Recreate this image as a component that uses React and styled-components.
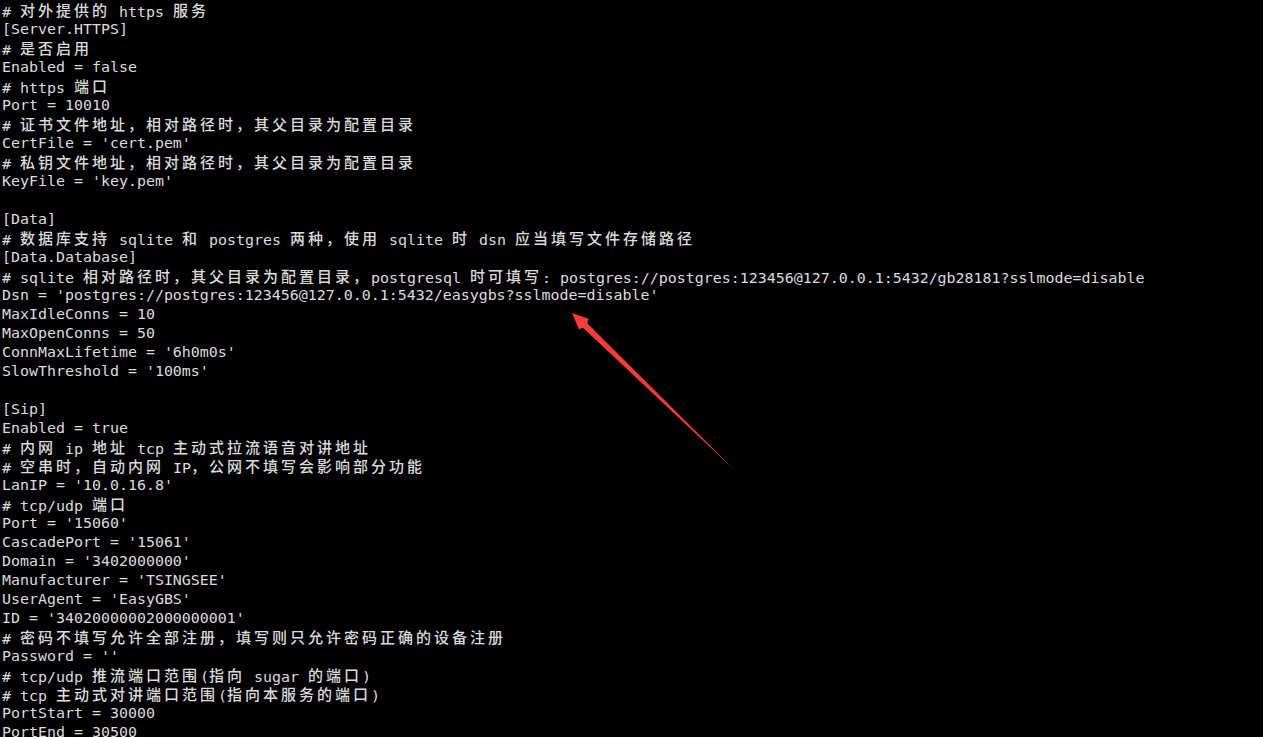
import styled, { createGlobalStyle } from "styled-components";

const GlobalStyle = createGlobalStyle`
  html, body {
    margin: 0;
    padding: 0;
    background: #000;
  }
`;

const lines = [
  "# 对外提供的 https 服务",
  "[Server.HTTPS]",
  "# 是否启用",
  "Enabled = false",
  "# https 端口",
  "Port = 10010",
  "# 证书文件地址，相对路径时，其父目录为配置目录",
  "CertFile = 'cert.pem'",
  "# 私钥文件地址，相对路径时，其父目录为配置目录",
  "KeyFile = 'key.pem'",
  "",
  "[Data]",
  "# 数据库支持 sqlite 和 postgres 两种，使用 sqlite 时 dsn 应当填写文件存储路径",
  "[Data.Database]",
  "# sqlite 相对路径时，其父目录为配置目录，postgresql 时可填写: postgres://postgres:123456@127.0.0.1:5432/gb28181?sslmode=disable",
  "Dsn = 'postgres://postgres:123456@127.0.0.1:5432/easygbs?sslmode=disable'",
  "MaxIdleConns = 10",
  "MaxOpenConns = 50",
  "ConnMaxLifetime = '6h0m0s'",
  "SlowThreshold = '100ms'",
  "",
  "[Sip]",
  "Enabled = true",
  "# 内网 ip 地址 tcp 主动式拉流语音对讲地址",
  "# 空串时，自动内网 IP，公网不填写会影响部分功能",
  "LanIP = '10.0.16.8'",
  "# tcp/udp 端口",
  "Port = '15060'",
  "CascadePort = '15061'",
  "Domain = '3402000000'",
  "Manufacturer = 'TSINGSEE'",
  "UserAgent = 'EasyGBS'",
  "ID = '34020000002000000001'",
  "# 密码不填写允许全部注册，填写则只允许密码正确的设备注册",
  "Password = ''",
  "# tcp/udp 推流端口范围(指向 sugar 的端口)",
  "# tcp 主动式对讲端口范围(指向本服务的端口)",
  "PortStart = 30000",
  "PortEnd = 30500",
];

// split a line into narrow and wide (CJK) runs, terminal style
const splitRuns = (text) => {
  const parts = text.split(/([\u3000-\u9fff\uff00-\uffef]+)/);
  return parts.filter((p) => p !== "").map((p) => ({
    wide: /[\u3000-\u9fff\uff00-\uffef]/.test(p),
    text: p,
  }));
};

const App = () => {
  return (
    <>
      <GlobalStyle />
      <Terminal>
        {lines.map((line, i) => (
          <Line key={i}>
            {splitRuns(line).map((run, j) =>
              run.wide ? <Wide key={j}>{run.text}</Wide> : <span key={j}>{run.text}</span>
            )}
          </Line>
        ))}
        <Arrow width="1263" height="737" viewBox="0 0 1263 737">
          <polygon
            points="572,313 588.6,318.8 587.3,323.3 735,470.5 582.9,327.7 578.8,329.3"
            fill="#f53b3b"
          />
        </Arrow>
      </Terminal>
    </>
  );
};

const Terminal = styled.div`
  position: relative;
  width: 1263px;
  height: 737px;
  overflow: hidden;
  background: #000;
  color: #dcdcdc;
  font-family: "DejaVu Sans Mono", "Liberation Mono", monospace;
  font-size: 14.95px;
  padding: 1px 0 0 2px;
  box-sizing: border-box;
`;

const Line = styled.div`
  height: 19px;
  line-height: 19px;
  white-space: pre;
`;

const Wide = styled.span`
  position: relative;
  top: -1px;
  font-family: "Noto Sans CJK SC", sans-serif;
  font-size: 15px;
  font-weight: 500;
  letter-spacing: 3px;
  line-height: 19px;
`;

const Arrow = styled.svg`
  position: absolute;
  left: 0;
  top: 0;
  pointer-events: none;
`;

export default App;
